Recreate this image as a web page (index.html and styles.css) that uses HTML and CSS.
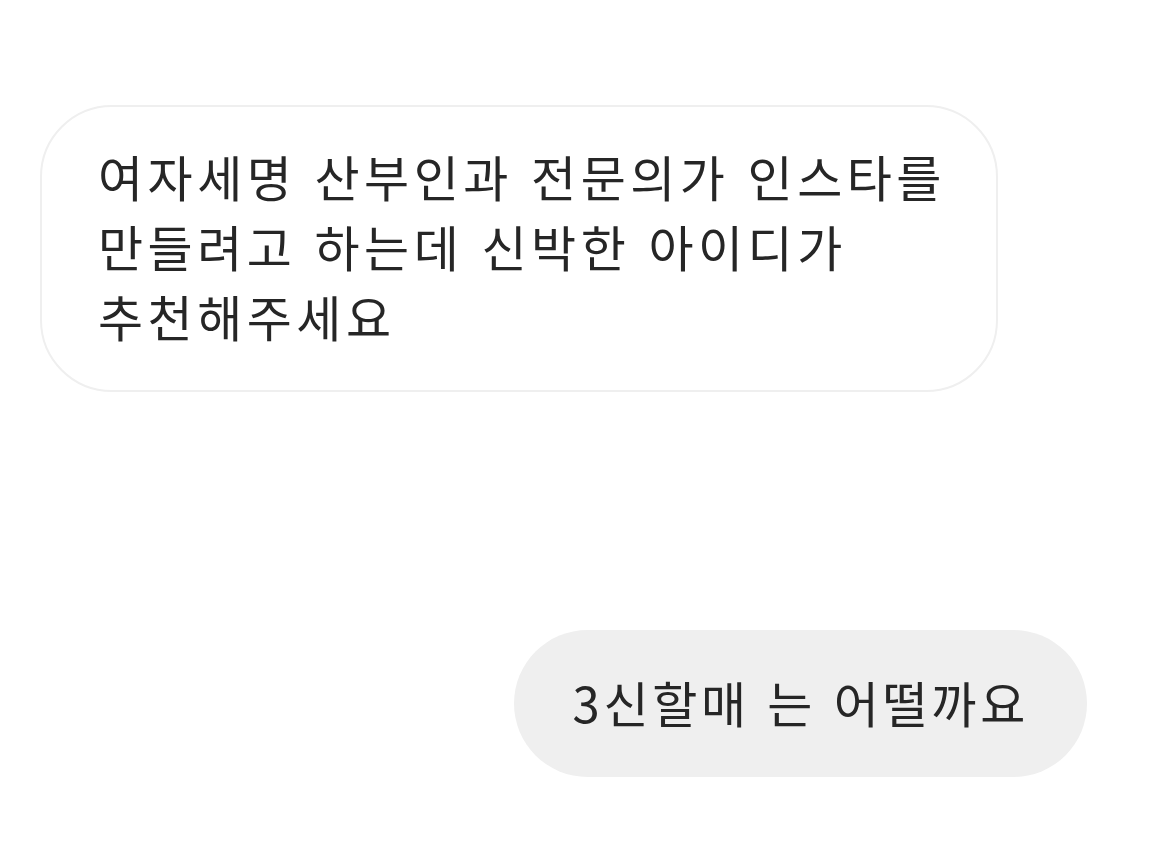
FILE: index.html
```html
<!DOCTYPE html>
<html lang="ko">
<head>
<meta charset="utf-8">
<link rel="stylesheet" href="styles.css">
</head>
<body>
<div class="chat">
  <div class="bubble received">여자세명 산부인과 전문의가 인스타를<br>만들려고 하는데 신박한 아이디가<br>추천해주세요</div>
  <div class="bubble sent">3신할매 는 어떨까요</div>
</div>
</body>
</html>
```
FILE: styles.css
```css
html, body {
  margin: 0;
  padding: 0;
  background: #ffffff;
}
body {
  width: 1166px;
  height: 862px;
  overflow: hidden;
}
.chat {
  display: flex;
  flex-direction: column;
  padding-top: 105px;
}
.bubble {
  font-family: "Noto Sans CJK KR", "Noto Sans", sans-serif;
  font-size: 49px;
  letter-spacing: 4.5px;
  color: #262626;
  line-height: 70px;
  box-sizing: border-box;
  white-space: nowrap;
}
.received {
  align-self: flex-start;
  margin-left: 40px;
  width: 958px;
  border: 2px solid #efefef;
  border-radius: 72px;
  padding: 34px 40px 39px 56px;
}
.sent {
  align-self: flex-end;
  margin-right: 79px;
  margin-top: 238px;
  height: 147px;
  display: flex;
  align-items: center;
  background: #efefef;
  border-radius: 74px;
  padding: 0 58px 4px;
  letter-spacing: 3.75px;
}
```
